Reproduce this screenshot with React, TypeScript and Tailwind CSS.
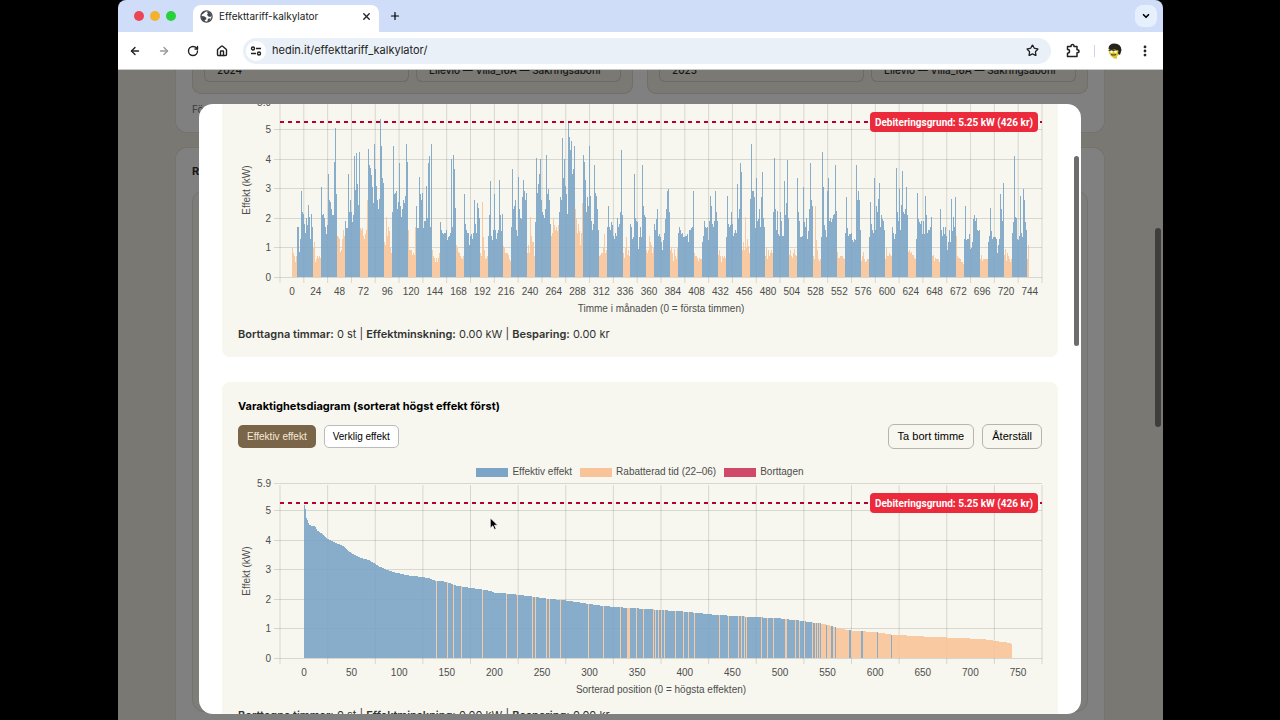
import { ArrowLeft, ArrowRight, ChevronDown, House, MoreVertical, Plus, RotateCw, Star, X } from 'lucide-react';

const BLUE = '#7ba4c7';
const ORANGE = '#f8c399';
const CRIMSON = '#d0496b';

const UNIT = 29.5;
const PLOT_H = 173;
const LEFT = 42;
const RIGHT = 804;

// Hourly load in units of 0.05 kW. Rows alternate: night 22–06, then day 06–22.
const HOURS = [
  [20, 16, 14, 10, 14],
  [34, 34, 17, 26, 58, 44, 43, 36, 30, 40, 35, 49, 41, 26, 43, 34],
  [20, 24, 10, 12, 14, 13, 14, 13],
  [61, 42, 43, 40, 34, 29, 35, 70, 52, 51, 46, 42, 42, 78, 101, 56],
  [28, 27, 26, 17, 18, 26, 32, 28],
  [38, 33, 33, 70, 44, 52, 44, 37, 42, 82, 59, 84, 63, 40, 49, 85],
  [33, 32, 33, 28, 26, 29, 32, 52],
  [87, 76, 74, 69, 61, 50, 90, 73, 62, 52, 46, 53, 107, 89, 67, 64],
  [24, 22, 41, 28, 34, 31, 20, 16],
  [44, 89, 56, 57, 58, 46, 51, 77, 48, 41, 46, 52, 50, 55, 90, 78],
  [32, 18, 18, 18, 15, 16, 15, 34],
  [48, 33, 33, 68, 56, 52, 57, 33, 38, 38, 62, 40, 77, 82, 34, 90],
  [18, 14, 13, 10, 13, 10, 13, 16],
  [37, 32, 30, 29, 30, 30, 32, 25, 27, 28, 30, 80, 34, 83, 73, 47],
  [22, 20, 17, 16, 14, 13, 12, 14],
  [56, 36, 32, 30, 30, 22, 28, 29, 26, 30, 52, 36, 30, 50, 47, 40],
  [16, 14, 51, 27, 18, 12, 13, 14],
  [28, 42, 65, 27, 28, 25, 32, 56, 32, 26, 30, 32, 66, 42, 31, 43],
  [21, 20, 16, 16, 16, 15, 12, 11],
  [34, 73, 46, 48, 52, 32, 28, 68, 46, 40, 39, 54, 66, 58, 52, 57],
  [16, 22, 16, 41, 28, 24, 24, 14],
  [37, 81, 57, 63, 70, 80, 52, 44, 42, 40, 46, 83, 56, 60, 52, 36],
  [28, 30, 40, 35, 32, 34, 31, 35],
  [44, 54, 52, 94, 67, 80, 62, 56, 43, 106, 95, 86, 92, 70, 73, 89],
  [46, 40, 30, 36, 31, 22, 30, 50],
  [83, 78, 66, 44, 54, 48, 89, 55, 38, 32, 36, 76, 57, 55, 46, 32],
  [14, 15, 16, 16, 20, 29, 16, 18],
  [34, 48, 34, 32, 37, 35, 28, 26, 30, 28, 40, 34, 36, 44, 86, 42],
  [14, 16, 13, 20, 27, 15, 18, 14],
  [36, 34, 26, 27, 70, 40, 38, 37, 19, 27, 34, 27, 76, 48, 42, 41],
  [18, 16, 18, 28, 24, 22, 16, 20],
  [36, 32, 39, 46, 28, 29, 27, 24, 18, 25, 30, 39, 46, 58, 60, 44],
  [18, 20, 16, 11, 19, 14, 12, 20],
  [30, 34, 32, 29, 30, 27, 27, 28, 28, 29, 24, 32, 32, 33, 34, 58],
  [16, 14, 14, 13, 11, 13, 12, 12],
  [24, 28, 38, 34, 33, 34, 25, 38, 55, 48, 36, 34, 38, 58, 44, 38],
  [15, 18, 14, 10, 14, 13, 14, 13],
  [27, 55, 36, 34, 35, 44, 36, 28, 30, 32, 30, 63, 40, 46, 77, 71],
  [18, 24, 18, 41, 20, 26, 21, 16],
  [53, 90, 58, 58, 54, 28, 33, 67, 38, 39, 46, 34, 54, 71, 40, 34],
  [14, 20, 12, 18, 14, 16, 18, 16],
  [44, 81, 46, 32, 45, 29, 28, 44, 38, 28, 28, 65, 42, 50, 79, 40],
  [15, 18, 14, 13, 16, 19, 15, 14],
  [67, 44, 38, 27, 27, 28, 61, 37, 34, 40, 26, 31, 46, 77, 52, 48],
  [14, 12, 48, 25, 18, 12, 11, 12],
  [27, 85, 61, 35, 32, 27, 58, 67, 38, 40, 37, 39, 42, 43, 76, 45],
  [17, 13, 13, 14, 14, 14, 13, 12],
  [30, 54, 33, 28, 29, 29, 30, 25, 24, 26, 25, 76, 52, 58, 52, 32],
  [11, 14, 17, 12, 10, 11, 12, 12],
  [27, 51, 36, 32, 30, 67, 32, 48, 44, 53, 64, 34, 42, 39, 38, 32],
  [12, 20, 14, 27, 14, 16, 15, 14],
  [34, 30, 26, 29, 74, 44, 38, 60, 32, 49, 72, 44, 43, 46, 61, 42],
  [17, 18, 16, 17, 15, 15, 13, 12],
  [26, 57, 39, 37, 36, 38, 29, 38, 29, 55, 42, 30, 32, 32, 34, 41],
  [14, 15, 11, 13, 12, 12, 12, 10],
  [46, 32, 28, 34, 29, 34, 28, 18, 24, 32, 24, 53, 31, 41, 34, 54],
  [28, 14, 13, 13, 12, 10, 10, 9],
  [26, 48, 25, 26, 26, 29, 19, 20, 24, 39, 42, 38, 40, 32, 31, 32],
  [12, 15, 11, 12, 12, 12, 12, 12],
  [24, 28, 47, 31, 26, 27, 27, 27, 26, 16, 22, 26, 56, 46, 38, 64],
  [15, 19, 11, 16, 14, 12, 10, 12],
  [30, 37, 82, 41, 40, 26, 25, 28, 33, 55, 30, 27, 60, 52, 37, 32],
  [12, 22],
];

// [position, kW] along the duration curve
const CURVE = [
  [0, 5.35], [2, 5.05], [3, 4.75], [6, 4.5], [12, 4.45], [14, 4.32], [20, 4.18], [25, 4.05], [30, 3.95],
  [42, 3.78], [50, 3.55], [60, 3.38], [68, 3.33], [80, 3.08], [95, 2.9], [110, 2.8], [130, 2.72], [138, 2.62],
  [150, 2.58], [160, 2.45], [175, 2.38], [195, 2.28], [200, 2.22], [215, 2.18], [237, 2.1], [250, 2.03],
  [275, 1.95], [310, 1.78], [330, 1.72], [365, 1.65], [400, 1.57], [430, 1.47], [450, 1.43], [500, 1.34],
  [520, 1.27], [540, 1.18], [550, 1.13], [560, 1.02], [575, 0.93], [600, 0.88], [615, 0.8], [650, 0.73],
  [700, 0.66], [720, 0.62], [727, 0.57], [740, 0.52], [744, 0.48],
];

// Discounted hours among the high positions, and full-price hours among the low ones
const NIGHT_AT = [
  139, 151, 157, 165, 187, 213, 224, 240, 243, 255, 258, 269, 299, 314, 332, 340, 341, 342, 349, 356, 367, 369,
  372, 375, 379, 390, 398, 404, 410, 436, 446, 456, 459, 462, 465, 480, 484, 487, 493, 506, 507, 516, 520, 525,
  534, 537, 539, 541,
];
const DAY_AT = [549, 554, 555, 558, 573, 574, 585, 586, 602, 617];

type Bar = { x: number; w: number; kw: number; night: boolean };

const hourBars: Bar[] = HOURS.flatMap((row, r) => row.map(v => ({ kw: v / 20, night: r % 2 === 0 })))
  .map((b, i) => ({ ...b, x: 54 + i * 0.9925, w: 0.9925 }));

function curveAt(pos: number) {
  const k = Math.max(1, CURVE.findIndex(([p]) => p >= pos));
  const [p0, v0] = CURVE[k - 1];
  const [p1, v1] = CURVE[k];
  return v0 + ((v1 - v0) * (pos - p0)) / (p1 - p0);
}

const durationBars: Bar[] = Array.from({ length: 744 }, (_, i) => ({
  x: 65.5 + i * 0.9525,
  w: 0.9525,
  kw: curveAt(i),
  night: i < 543 ? NIGHT_AT.includes(i) : !DAY_AT.includes(i),
}));

const range = (n: number, step: number) => Array.from({ length: n }, (_, i) => i * step);

type ChartProps = { bars: Bar[]; ticks: number[]; cells: number; firstTick: number; tickGap: number; title: string };

function Chart({ bars, ticks, cells, firstTick, tickGap, title }: ChartProps) {
  const y = (kw: number) => PLOT_H - kw * UNIT;
  const cell = (RIGHT - LEFT) / cells;
  return (
    <svg viewBox="0 0 804 212" className="block h-auto w-full overflow-visible font-['Liberation_Sans',sans-serif] text-[10px]" fill="#4d4d4d" role="img" aria-label={title}>
      <g stroke="#000" strokeOpacity={0.13}>
        {range(cells + 1, 1).map(i => <line key={i} x1={LEFT + i * cell} x2={LEFT + i * cell} y1={0} y2={PLOT_H + 6} />)}
        {[0, 1, 2, 3, 4, 5, 5.9].map(v => <line key={v} x1={LEFT - 6} x2={RIGHT} y1={Math.floor(y(v)) + 0.5} y2={Math.floor(y(v)) + 0.5} />)}
      </g>
      <g shapeRendering="crispEdges">
        {bars.map((b, i) => (
          <rect key={i} x={b.x} y={y(b.kw)} width={b.w} height={b.kw * UNIT} fill={b.night ? ORANGE : BLUE} fillOpacity={0.9} />
        ))}
      </g>
      {[0, 1, 2, 3, 4, 5, 5.9].map(v => <text key={v} x={33} y={Math.floor(y(v)) + 4} textAnchor="end">{v}</text>)}
      {ticks.map((t, i) => <text key={t} x={firstTick + i * tickGap} y={PLOT_H + 18} textAnchor="middle">{t}</text>)}
      <text x={(LEFT + RIGHT) / 2} y={PLOT_H + 35} textAnchor="middle">{title}</text>
      <text transform="translate(12 86) rotate(-90)" textAnchor="middle">Effekt (kW)</text>
      <line x1={LEFT} x2={RIGHT} y1={18} y2={18} stroke="#b8002e" strokeWidth={2} strokeDasharray="4 4" />
      <rect x={632} y={8} width={168} height={20} rx={4} fill="#eb2a3c" />
      <text x={716} y={22} textAnchor="middle" className="font-[Roboto,sans-serif] font-bold" fill="#fff">Debiteringsgrund: 5.25 kW (426 kr)</text>
    </svg>
  );
}

function Summary() {
  return (
    <p className="mt-2 text-[11px] leading-5 text-[#333]">
      <b className="font-semibold">Borttagna timmar:</b> 0 st | <b className="font-semibold">Effektminskning:</b> 0.00 kW | <b className="font-semibold">Besparing:</b> 0.00 kr
    </p>
  );
}

function Legend({ color, label }: { color: string; label: string }) {
  return (
    <li className="flex items-center gap-1">
      <span className="h-[9px] w-8" style={{ background: color }} />{label}
    </li>
  );
}

function Earth() {
  return (
    <svg viewBox="0 0 14 14" className="mr-1.5 size-[13px]">
      <circle cx="7" cy="7" r="6" fill="#fff" stroke="#45484d" strokeWidth="1.4" />
      <path d="M1.500 5.500 4 3.500 7 1.200 4 1.500 1.300 4.500zM7.500 2l3 .5 2 3.500-1.500 1.500-2-.5-1.500-2 1-1zM1 6.500l3.500.3 2.500 1.700-.5 1.700-1.500.8.5 2-3-2zM8.500 9.500l3-.5-1.200 2.500-2.300 1.200z" fill="#45484d" />
    </svg>
  );
}

function Extension() {
  return (
    <svg viewBox="0 0 16 16" className="size-4" fill="none" stroke="currentColor" strokeWidth="1.500" strokeLinejoin="round">
      <path d="M2.500 3.500H6q0-2 1.500-2t1.500 2h3v3.300q2 0 2 1.500t-2 1.500v3.700H2.500V10.200q2 0 2-1.900t-2-1.900z" />
    </svg>
  );
}

function BrowserBar() {
  return (
    <header className="shrink-0">
      <div className="flex h-8 items-end bg-[#cfddf9] pr-1.5">
        <div className="flex gap-[6px] self-center pl-4">
          <span className="size-[10px] rounded-full bg-[#ec4553]" />
          <span className="size-[10px] rounded-full bg-[#f4b22e]" />
          <span className="size-[10px] rounded-full bg-[#27d13c]" />
        </div>
        <div className="ml-[17px] flex h-[27px] w-[186px] items-center rounded-t-lg bg-white px-[7px] pb-1 text-[10px] text-[#222]">
          <Earth />
          <span className="flex-1">Effekttariff-kalkylator</span>
          <button aria-label="Stäng flik"><X size={11} strokeWidth={3} /></button>
        </div>
        <button aria-label="Ny flik" className="ml-2.5 self-center"><Plus size={12} strokeWidth={2.4} /></button>
        <button aria-label="Sök flikar" className="ml-auto flex size-[22px] items-center justify-center self-center rounded-lg bg-[#e6effc]"><ChevronDown size={10} strokeWidth={4} /></button>
      </div>
      <div className="flex h-[38px] items-center border-b border-[#c9c9c9] bg-white px-[11px] text-[#222]">
        <nav className="flex gap-[17px]">
          <button aria-label="Tillbaka"><ArrowLeft size={12} strokeWidth={2.8} /></button>
          <button aria-label="Framåt" className="text-[#999]"><ArrowRight size={12} strokeWidth={2.8} /></button>
          <button aria-label="Läs in igen"><RotateCw size={12} strokeWidth={2.8} /></button>
          <button aria-label="Startsida"><House size={12} strokeWidth={2.8} /></button>
        </nav>
        <div className="ml-[15px] flex h-[26px] flex-1 items-center rounded-full bg-[#e9f0f8] pl-[3px] pr-3">
          <span className="flex size-5 items-center justify-center rounded-full bg-white">
            <svg viewBox="0 0 12 12" className="size-3" fill="none" stroke="currentColor" strokeWidth="1.4"><circle cx="3" cy="3.5" r="1.5" /><path d="M6 3.5h5M1 8.5h5" /><circle cx="9" cy="8.5" r="1.5" /></svg>
          </span>
          <input aria-label="Adress" defaultValue="hedin.it/effekttariff_kalkylator/" className="ml-1.5 flex-1 bg-transparent text-[11px] outline-none" />
          <button aria-label="Bokmärk"><Star size={13} strokeWidth={2.4} /></button>
        </div>
        <button aria-label="Tillägg" className="ml-[14px]"><Extension /></button>
        <span className="ml-[13px] h-3 w-px bg-[#c7d6ee]" />
        <button aria-label="Profil" className="ml-3"><Avatar /></button>
        <button aria-label="Meny" className="ml-[15px]"><MoreVertical size={14} strokeWidth={2.8} /></button>
      </div>
    </header>
  );
}

function Avatar() {
  return (
    <svg viewBox="0 0 16 16" className="size-4">
      <path d="M2 6h11v5l-3 2v2.500H7L4 13l-2-3z" fill="#dcc42c" />
      <path d="M1.500 6q0-5.500 6-5.500 6.500 0 7 6.500l-1.500 5-2-1.500.5-3L8 6.500 4 7z" fill="#26221c" />
      <path d="M1.500 7.500h8M4 11.500q2.500 1 5 0" fill="none" stroke="#4b4416" strokeWidth="1.200" />
      <circle cx="4.500" cy="8.700" r="1.300" fill="#fff" /><circle cx="8.500" cy="8.700" r="1.300" fill="#fff" />
    </svg>
  );
}

function YearPanel({ year }: { year: string }) {
  return (
    <div className="grid h-6 flex-1 grid-cols-2 gap-[7px] rounded-b-[9px] border border-t-0 border-[#6f6e69] bg-[#7a7973] px-[11px]">
      <span className="h-3 rounded-b-md border border-t-0 border-[#6b6a65] pl-3"><span className="-mt-2 block leading-4">{year}</span></span>
      <span className="h-3 rounded-b-md border border-t-0 border-[#6b6a65] pl-3"><span className="-mt-2 block whitespace-nowrap leading-4">Ellevio — Villa_16A — Säkringsabonr</span></span>
    </div>
  );
}

function PageBehind() {
  return (
    <div className="flex h-full flex-col gap-3.5 overflow-hidden bg-[#7a7872] pl-[57px] pr-[58px] text-[10px] font-medium text-[#161616]">
      <section className="h-[63px] shrink-0 rounded-b-xl border border-t-0 border-[#74736e] bg-[#808080] px-4">
        <div className="flex gap-3.5 overflow-hidden">
          <YearPanel year="2024" />
          <YearPanel year="2025" />
        </div>
        <p className="mt-2 font-normal text-[#3a3a3a]">Förbrukning</p>
      </section>
      <section className="flex flex-1 flex-col rounded-t-xl border border-b-0 border-[#74736e] bg-[#808080] px-4 pt-[15px]">
        <h2 className="text-[11px] font-bold">Resultat</h2>
        <div className="mb-2 mt-2.5 flex-1 rounded-xl border border-[#74736e] bg-[#7d7d7a]" />
      </section>
    </div>
  );
}

export default function App() {
  return (
    <main className="h-screen overflow-hidden bg-black pl-[118px] pr-[117px] font-[Inter,sans-serif]">
      <div className="flex h-full flex-col overflow-hidden rounded-t-lg">
        <BrowserBar />
        <div className="relative min-h-0 flex-1">
          <PageBehind />
          <span className="absolute right-[2px] top-[158px] h-[199px] w-[6px] rounded-full bg-[#3e3e3c]" />

          {/* Dialog */}
          <div className="absolute inset-0 pb-[6px] pl-[81px] pr-[82px] pt-[34px]">
            <div role="dialog" aria-label="Effektdiagram" className="relative h-full overflow-hidden rounded-[14px] bg-white px-[23px]">
              <section className="mb-[25px] rounded-b-lg bg-[#f7f7ef] px-4 pb-[13px]">
                <Chart bars={hourBars} ticks={range(32, 24)} cells={32} firstTick={54} tickGap={23.8} title="Timme i månaden (0 = första timmen)" />
                <Summary />
              </section>

              <section className="rounded-t-lg bg-[#f7f7ef] px-4 pb-4 pt-3.5">
                <h2 className="text-[11px] font-bold leading-5 text-black">Varaktighetsdiagram (sorterat högst effekt först)</h2>
                <div className="mt-2 flex items-center gap-2 font-['Liberation_Sans',sans-serif] text-[10px] text-black">
                  <button className="h-[23px] rounded-[5px] bg-[#7b6548] px-[9px] text-[#f4ead9]">Effektiv effekt</button>
                  <button className="h-[23px] rounded-[5px] border border-[#bbb] bg-white px-2">Verklig effekt</button>
                  <button className="ml-auto h-[25px] rounded-md border border-[#b5b5ae] px-[9px] text-[11px]">Ta bort timme</button>
                  <button className="h-[25px] rounded-md border border-[#b5b5ae] px-[9px] text-[11px]">Återställ</button>
                </div>
                <ul className="mb-[5px] mt-[15px] flex justify-center gap-2 font-['Liberation_Sans',sans-serif] text-[10px] leading-4 text-[#4d4d4d]">
                  <Legend color={BLUE} label="Effektiv effekt" />
                  <Legend color={ORANGE} label="Rabatterad tid (22–06)" />
                  <Legend color={CRIMSON} label="Borttagen" />
                </ul>
                <Chart bars={durationBars} ticks={range(16, 50)} cells={16} firstTick={66} tickGap={47.6} title="Sorterad position (0 = högsta effekten)" />
                <Summary />
              </section>
              <span className="absolute right-[2px] top-[52px] h-[190px] w-[5px] rounded-full bg-[#6d6d6d]" />
            </div>
          </div>

          {/* Pointer */}
          <svg viewBox="0 0 10 15" className="absolute left-[371px] top-[447px] h-[14px] w-[10px]">
            <path d="M1 1v11l2.700-2.500 1.800 4 1.800-.8-1.800-3.900H9z" fill="#000" stroke="#fff" strokeWidth=".8" />
          </svg>
        </div>
      </div>
    </main>
  );
}
